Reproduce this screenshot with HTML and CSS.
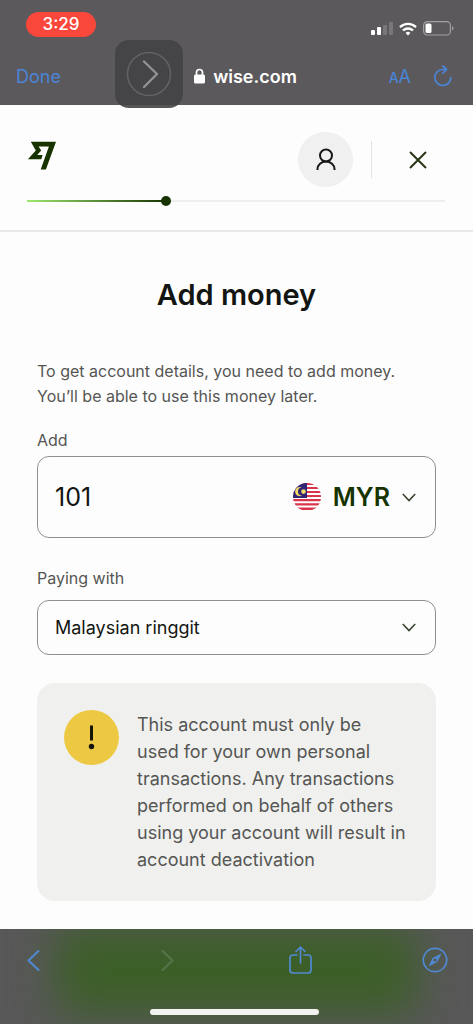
FILE: index.html
```html
<!DOCTYPE html>
<html lang="en">
<head>
<meta charset="utf-8">
<meta name="viewport" content="width=device-width, initial-scale=1">
<title>Add money</title>
<link rel="stylesheet" href="styles.css">
</head>
<body>
<div class="browser-top">
  <div class="status">
    <span class="clock">3:29</span>
    <div class="signals">
      <svg width="22" height="14" viewBox="0 0 22 14" aria-hidden="true"><g fill="#fff"><rect x="0" y="8" width="4" height="5" rx="1"/><rect x="6" y="5" width="4" height="8" rx="1"/></g><g fill="#79777a"><rect x="12" y="3" width="4" height="10" rx="1"/><rect x="18" y="0" width="4" height="13" rx="1"/></g></svg>
      <svg width="18" height="14" viewBox="0 0 18 14" fill="none" stroke="#fff" stroke-width="2.4" aria-hidden="true"><path d="M1 5.2a11.4 11.4 0 0 1 16 0"/><path d="M4 8.5a7.2 7.2 0 0 1 10 0"/><path d="M6.600 11 9 13.600l2.400-2.600a3.500 3.500 0 0 0-4.800 0z" fill="#fff" stroke="none"/></svg>
      <svg width="31" height="15" viewBox="0 0 31 15" aria-hidden="true"><rect x=".6" y=".6" width="26.800" height="13.400" rx="3.800" fill="none" stroke="#a09fa2" stroke-width="1.200"/><rect x="2.500" y="2.500" width="6" height="9.600" rx="1.500" fill="#fff"/><path d="M29 5v4.600q1.500-.8 1.500-2.300T29 5z" fill="#a09fa2"/></svg>
    </div>
  </div>
  <div class="address">
    <button class="done" type="button">Done</button>
    <div class="site">
      <svg width="11" height="16" viewBox="0 0 11 16" aria-hidden="true"><rect y="6.500" width="11" height="9" rx="1.600" fill="#fff"/><path d="M2.500 7V4.500a3 3 0 0 1 6 0V7" fill="none" stroke="#fff" stroke-width="1.700"/></svg>
      <span>wise.com</span>
    </div>
    <div class="tools">
      <button type="button" class="text-size" aria-label="Text size"><span class="small-a">A</span>A</button>
      <button type="button" aria-label="Reload"><svg width="20" height="22" viewBox="0 0 20 22" fill="none" stroke="#4b85d8" stroke-width="1.700" stroke-linecap="round" stroke-linejoin="round"><path d="M17.800 12.500A8 8 0 1 1 9.800 4.500h3.500"/><path d="M9.800 1l3.800 3.500L9.800 8.200"/></svg></button>
    </div>
  </div>
  <button class="assist" type="button" aria-label="Show menu"><svg width="46" height="46" viewBox="0 0 46 46" fill="none"><circle cx="23" cy="23" r="21.500" stroke="#636265" stroke-width="1.500"/><path d="M18 10.500 31 23 18 36" stroke="#929194" stroke-width="2.400" stroke-linecap="round" stroke-linejoin="round"/></svg></button>
</div>

<header class="header">
  <div class="header-row">
    <svg class="logo" width="30" height="29" viewBox="0 0 30 29" role="img" aria-label="Wise"><path fill="#163300" fill-rule="evenodd" d="M3.800.8H29L18.900 28.500H13.700L21.900 5.500H11.600l2.600 4-4 4.600h5.400L14.300 18.300H.9L8.800 9.400z"/></svg>
    <div class="header-actions">
      <button class="profile" type="button" aria-label="Profile"><svg width="20" height="23" viewBox="0 0 20 23" fill="none" stroke="#171717" stroke-width="2"><circle cx="10" cy="7.500" r="6"/><path d="M1.500 22v-1a8.500 7.500 0 0 1 17 0v1"/></svg></button>
      <span class="divider"></span>
      <button class="close" type="button" aria-label="Close"><svg width="18" height="18" viewBox="0 0 18 18" fill="none" stroke="#283516" stroke-width="2"><path d="M1 1l16 16M17 1 1 17"/></svg></button>
    </div>
  </div>
  <div class="progress" role="progressbar" aria-label="Progress" aria-valuenow="33" aria-valuemin="0" aria-valuemax="100"><div class="progress-fill" style="width:33.600%"></div><div class="progress-dot"></div></div>
</header>

<main class="content">
  <h1>Add money</h1>
  <p class="intro">To get account details, you need to add money. You’ll be able to use this money later.</p>
  <label class="label" for="amount">Add</label>
  <div class="amount">
    <input id="amount" type="text" inputmode="decimal" value="101">
    <button class="currency" type="button">
      <svg width="28" height="28" viewBox="0 0 28 28" aria-hidden="true"><defs><clipPath id="round"><circle cx="14" cy="14" r="14"/></clipPath></defs><g clip-path="url(#round)"><path fill="#fff" d="M0 0h28v28H0z"/><path fill="#d9364c" d="M0 0h28v2H0zM0 4h28v2H0zM0 8h28v2H0zM0 12h28v2H0zM0 16h28v2.300H0zM0 20.300h28v2.200H0zM0 24.500h28V27H0z"/><path fill="#302475" d="M0 0h14v15H0z"/><path fill="#f2dc65" d="M9 4.600a4.600 4.600 0 1 0 0 8 3.800 3.800 0 1 1 0-8z"/><circle cx="10.500" cy="8.600" r="2.300" fill="#f2dc65"/></g></svg>
      <span>MYR</span>
      <svg class="chevron" width="14" height="9" viewBox="0 0 14 9" fill="none" stroke="#384330" stroke-width="1.600"><path d="M.8 1 7 7.500 13.200 1"/></svg>
    </button>
  </div>
  <label class="label" for="method">Paying with</label>
  <div class="select-wrap">
    <select id="method"><option>Malaysian ringgit</option></select>
    <svg class="chevron" width="14" height="9" viewBox="0 0 14 9" fill="none" stroke="#384330" stroke-width="1.600" aria-hidden="true"><path d="M.8 1 7 7.500 13.200 1"/></svg>
  </div>
  <section class="notice">
    <svg width="55" height="55" viewBox="0 0 55 55" aria-hidden="true"><circle cx="27.500" cy="27.500" r="27.500" fill="#edc843"/><path d="M26 15.500h3v15h-3z" fill="#171508"/><circle cx="27.500" cy="36.500" r="2.700" fill="#171508"/></svg>
    <p>This account must only be used for your own personal transactions. Any transactions performed on behalf of others using your account will result in account deactivation</p>
  </section>
</main>

<nav class="browser-bottom" aria-label="Browser">
  <div class="nav-row">
    <button type="button" aria-label="Back"><svg width="13" height="21" viewBox="0 0 13 21" fill="none" stroke="#5089d2" stroke-width="2" stroke-linecap="round" stroke-linejoin="round"><path d="M11.500 1 1.500 10.500l10 9.500"/></svg></button>
    <button type="button" aria-label="Forward" disabled><svg width="13" height="21" viewBox="0 0 13 21" fill="none" stroke="#55754a" stroke-width="2" stroke-linecap="round" stroke-linejoin="round"><path d="m1.500 1 10 9.500-10 9.500"/></svg></button>
    <button type="button" aria-label="Share"><svg width="24" height="28" viewBox="0 0 24 28" fill="none" stroke="#5089d2" stroke-width="1.700" stroke-linecap="round" stroke-linejoin="round"><path d="M8 9H4a3 3 0 0 0-3 3v12a3 3 0 0 0 3 3h15a3 3 0 0 0 3-3V12a3 3 0 0 0-3-3h-4M11.500 17V1.500M7 5.500l4.500-4.500L16 5.500"/></svg></button>
    <button type="button" aria-label="Open in Safari"><svg width="26" height="26" viewBox="0 0 26 26" fill="none"><circle cx="13" cy="13" r="11.700" stroke="#5089d2" stroke-width="1.700"/><path fill="#5089d2" fill-rule="evenodd" d="M19.500 6.500 15.300 15 6.500 19.500 10.800 10.800zM13 11.400a1.600 1.600 0 1 0 0 3.200 1.600 1.600 0 0 0 0-3.200z"/></svg></button>
  </div>
  <div class="home"></div>
</nav>
</body>
</html>
```
FILE: styles.css
```css
* { box-sizing: border-box; }
body {
  margin: 0;
  min-height: 100vh;
  display: flex;
  flex-direction: column;
  background: #fdfdfd;
  color: #121511;
  font-family: Inter, "Liberation Sans", sans-serif;
}
button {
  padding: 0;
  border: 0;
  background: none;
  color: inherit;
  font: inherit;
}
svg { display: block; flex: none; }
h1, p { margin: 0; }

.browser-top {
  position: relative;
  background: #5b595c;
  padding: 12px 16px 10px;
}
.status {
  display: flex;
  justify-content: space-between;
  align-items: center;
  padding: 0 3px 0 10px;
}
.clock {
  width: 70px;
  border-radius: 13px;
  background: #fa473c;
  color: #fff;
  font-size: 17px;
  font-weight: 500;
  line-height: 25px;
  text-align: center;
}
.signals { display: flex; align-items: center; gap: 6px; padding-top: 8px; }
.address {
  display: grid;
  grid-template-columns: 1fr auto 1fr;
  align-items: center;
  height: 38px;
  margin-top: 20px;
}
.done {
  justify-self: start;
  color: #4b85d8;
  font-size: 18px;
}
.site {
  display: flex;
  align-items: center;
  gap: 8px;
  margin-left: 18px;
  color: #fff;
  font-size: 18px;
  font-weight: 600;
}
.tools { display: flex; justify-content: flex-end; align-items: center; gap: 22px; padding-right: 4px; color: #4b85d8; }
.text-size { font-size: 18px; }
.small-a { font-size: 14px; font-weight: 500; }
.assist {
  position: absolute;
  left: 115px;
  top: 40px;
  width: 68px;
  height: 68px;
  display: grid;
  place-items: center;
  border-radius: 14px;
  background: rgba(66, 65, 68, .9);
}

.header { padding: 27px 28px 24px 27px; border-bottom: 2px solid #e9e9e9; }
.header-row { display: flex; justify-content: space-between; align-items: center; }
.logo { margin-bottom: 8px; }
.header-actions { display: flex; align-items: center; }
.profile {
  display: grid;
  place-items: center;
  width: 55px;
  height: 55px;
  border-radius: 50%;
  background: #f0f0f0;
}
.divider { width: 1px; height: 37px; margin-left: 18px; background: #e2e2e2; }
.close { display: grid; place-items: center; width: 54px; height: 54px; margin-left: 19px; }
.progress { display: flex; align-items: center; height: 10px; margin-top: 9px; background: linear-gradient(#eee, #eee) center / 100% 2px no-repeat; }
.progress-fill { height: 2px; background: linear-gradient(90deg, #9fe870, #163300); }
.progress-dot { width: 10px; height: 10px; margin-left: -6px; border-radius: 50%; background: #163300; }

.content { flex: 1; padding: 43px 37px 27px; }
h1 { font-size: 29px; line-height: 40px; font-weight: 600; text-align: center; }
.intro { margin-top: 44px; color: #555654; font-size: 16px; line-height: 25px; }
.label { display: block; color: #555654; font-size: 16px; line-height: 24px; }
.intro + .label { margin-top: 19px; }
.amount {
  display: flex;
  align-items: center;
  height: 82px;
  margin: 4px 0 28px;
  padding: 0 19px 0 17px;
  border: 1px solid #8f908e;
  border-radius: 12px;
}
.amount input {
  flex: 1;
  min-width: 0;
  padding: 0;
  border: 0;
  outline: 0;
  background: none;
  color: #121511;
  font: 25px/32px Inter, "Liberation Sans", sans-serif;
}
.currency { display: flex; align-items: center; gap: 12px; color: #163300; font-size: 25px; line-height: 32px; font-weight: 600; }
.select-wrap { display: grid; align-items: center; margin-top: 10px; }
.select-wrap > * { grid-area: 1 / 1; }
.select-wrap select {
  appearance: none;
  width: 100%;
  height: 55px;
  padding: 0 44px 0 17px;
  border: 1px solid #8f908e;
  border-radius: 12px;
  background: none;
  color: #121511;
  font: 18px/24px Inter, "Liberation Sans", sans-serif;
}
.select-wrap .chevron { justify-self: end; margin-right: 20px; pointer-events: none; }
.notice {
  display: flex;
  gap: 18px;
  margin-top: 28px;
  padding: 27px 30px 28px 27px;
  border-radius: 18px;
  background: #f0f0ee;
}
.notice p { padding-top: 1px; color: #555654; font-size: 18px; line-height: 27px; }

.browser-bottom {
  position: relative;
  overflow: hidden;
  padding: 17px 25px 9px 20px;
  background: #585858;
}
.browser-bottom::before {
  content: "";
  position: absolute;
  inset: 10px 68px 22px;
  background: #3b5f26;
  filter: blur(22px);
  box-shadow: 0 0 0 12px #3d5e2a;
}
.nav-row { position: relative; display: flex; justify-content: space-between; align-items: center; height: 28px; }
.nav-row button { display: grid; place-items: center; width: 26px; height: 28px; }
.home { position: relative; width: 169px; max-width: 40%; height: 6px; margin: 35px auto 0; border-radius: 3px; background: #f2f2f0; }
```
